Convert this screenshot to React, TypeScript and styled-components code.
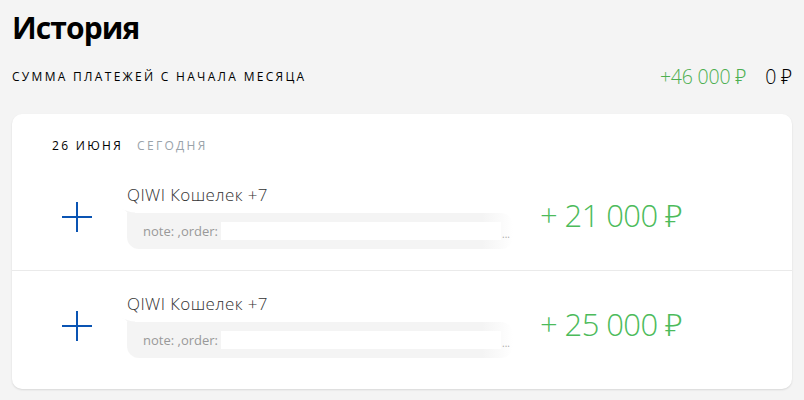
import React from "react";
import styled, { createGlobalStyle } from "styled-components";

const Global = createGlobalStyle`
  html, body { margin: 0; padding: 0; background: #f4f4f4; }
  body { font-family: "Open Sans", "Noto Sans", sans-serif; color: #000; }
`;

const Page = styled.div`
  width: 804px;
  height: 400px;
  box-sizing: border-box;
  padding: 8px 12px 0 12px;
  overflow: hidden;
`;

const Title = styled.h1`
  margin: 0;
  font-size: 30px;
  line-height: 40px;
  font-weight: 700;
  letter-spacing: -0.9px;
`;

const SummaryRow = styled.div`
  display: flex;
  align-items: center;
  justify-content: space-between;
  margin-top: 18px;
  height: 20px;
`;

const Caption = styled.div<{ muted?: boolean }>`
  font-size: 12px;
  font-weight: 500;
  letter-spacing: 2.3px;
  text-transform: uppercase;
  color: ${(p) => (p.muted ? "#9aa3aa" : "#000")};
`;

const Totals = styled.div`
  display: flex;
  align-items: center;
  gap: 19px;
`;

const Total = styled.span<{ positive?: boolean }>`
  font-size: 19.5px;
  font-weight: 300;
  letter-spacing: -0.2px;
  color: ${(p) => (p.positive ? "#4caf50" : "#000")};
`;

const Card = styled.div`
  margin-top: 28px;
  background: #fff;
  border-radius: 10px;
  box-shadow: 0 1px 2px rgba(0, 0, 0, 0.12);
  padding: 20px 0 10px 0;
`;

const DateHeader = styled.div`
  display: flex;
  gap: 14px;
  padding-left: 40px;
  height: 22px;
  align-items: center;
  margin-bottom: 6px;
`;

const Row = styled.div`
  display: grid;
  grid-template-columns: 112px 416px 1fr;
  align-items: center;
  height: 108px;
  & + & {
    border-top: 1px solid #eaeaea;
  }
`;

const IconCell = styled.div`
  display: flex;
  justify-content: center;
  padding-left: 17px;
  margin-top: 2px;
`;

const Body = styled.div`
  display: flex;
  flex-direction: column;
  padding-left: 3px;
`;

const Name = styled.div`
  font-size: 17px;
  font-weight: 300;
  color: #333;
  line-height: 22px;
  letter-spacing: 0.4px;
`;

const Bubble = styled.div`
  position: relative;
  margin-top: 7px;
  width: 386px;
  height: 36px;
  border-radius: 0 12px 12px 12px;
  background: linear-gradient(to right, #f4f4f4 0%, #f4f4f4 92%, #fff 100%);
  display: flex;
  align-items: center;
  padding-left: 16px;
  box-sizing: border-box;
  &::before {
    content: "";
    position: absolute;
    left: -6px;
    top: -4px;
    width: 14px;
    height: 14px;
    background: #f4f4f4;
    clip-path: path("M0 0 C6 2 9 6 10 14 L14 14 L14 4 C10 4 4 2 0 0 Z");
  }
`;

const Note = styled.span`
  font-size: 13px;
  color: #999;
  font-weight: 400;
  white-space: nowrap;
`;

const Redacted = styled.span`
  display: inline-block;
  width: 280px;
  height: 18px;
  background: #fff;
  margin-left: 3px;
`;

const Ellipsis = styled.span`
  font-size: 10px;
  color: #aaa;
  margin-left: 1px;
  align-self: flex-end;
  margin-bottom: 8px;
`;

const Amount = styled.div`
  font-size: 31px;
  font-weight: 300;
  color: #4cbb5b;
  letter-spacing: -0.6px;
  margin-top: -2px;
  white-space: nowrap;
`;

const Plus = () => (
  <svg width="32" height="32" viewBox="0 0 32 32">
    <path d="M16 1 V31 M1 16 H31" stroke="#0a54b3" strokeWidth="2" fill="none" />
  </svg>
);

const items = [{ amount: "+ 21 000 ₽" }, { amount: "+ 25 000 ₽" }];

export default function App() {
  return (
    <>
      <Global />
      <Page>
        <Title>История</Title>
        <SummaryRow>
          <Caption>Сумма платежей с начала месяца</Caption>
          <Totals>
            <Total positive>+46 000 ₽</Total>
            <Total>0 ₽</Total>
          </Totals>
        </SummaryRow>
        <Card>
          <DateHeader>
            <Caption>26 июня</Caption>
            <Caption muted>Сегодня</Caption>
          </DateHeader>
          {items.map((it, i) => (
            <Row key={i}>
              <IconCell>
                <Plus />
              </IconCell>
              <Body>
                <Name>QIWI Кошелек +7</Name>
                <Bubble>
                  <Note>note: ,order:</Note>
                  <Redacted />
                  <Ellipsis>...</Ellipsis>
                </Bubble>
              </Body>
              <Amount>{it.amount}</Amount>
            </Row>
          ))}
        </Card>
      </Page>
    </>
  );
}
